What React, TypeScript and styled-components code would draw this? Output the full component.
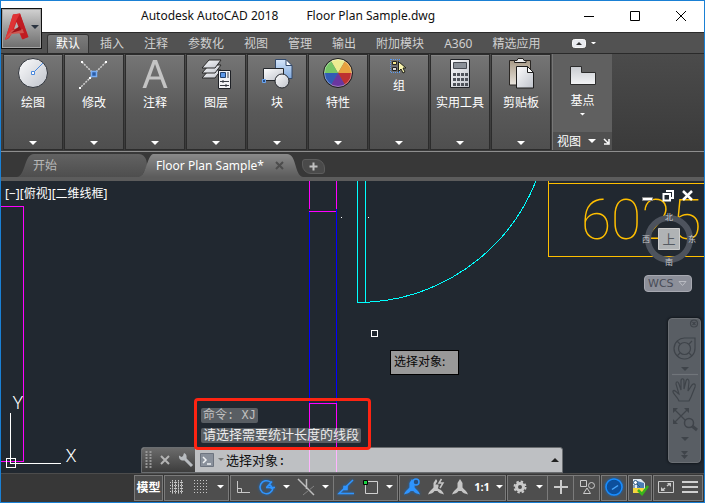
import React from "react";
import styled, { createGlobalStyle, css } from "styled-components";

const UI = `"Noto Sans", "Noto Sans CJK SC", sans-serif`;
const CJK = `"Noto Sans CJK SC", sans-serif`;

const Global = createGlobalStyle`
  * { box-sizing: border-box; }
  body { margin: 0; background: #373737; }
  button { border: 0; padding: 0; margin: 0; background: none; color: inherit; font: inherit; }
  svg { display: block; flex: none; }
`;

const Window = styled.div`
  position: relative;
  display: flex;
  flex-direction: column;
  height: 100vh;
  border: 1px solid #1a80d4;
  font: 12px/18px ${CJK};
  color: #e6e6e6;
  overflow: hidden;
`;

/* ---------- title bar ---------- */
const TitleBar = styled.header`
  display: flex;
  align-items: center;
  height: 31px;
  flex: none;
  padding: 0 0 2px 140px;
  background: #fff;
  color: #111;
`;
const Title = styled.h1`
  display: flex;
  gap: 28px;
  margin: 0;
  flex: 1;
  font: 400 12px/20px ${UI};
  white-space: nowrap;
`;
const WindowButton = styled.button`
  display: grid;
  place-items: center;
  width: 46px;
  height: 28px;
`;
const AppButton = styled.button`
  position: absolute;
  left: 0;
  top: 7px;
  display: flex;
  align-items: center;
  justify-content: center;
  gap: 1px;
  width: 41px;
  height: 41px;
  padding-bottom: 3px;
  border: 1px solid #111;
  box-shadow: inset 0 0 0 1px #a5a5a5;
  background: linear-gradient(#d2d2d2, #9b9b9b 50%, #6e6e6e);
`;

/* ---------- ribbon ---------- */
const RibbonTabs = styled.nav`
  display: flex;
  align-items: flex-end;
  gap: 4px;
  height: 21px;
  flex: none;
  padding-left: 47px;
  border-top: 1px solid #2b2b2b;
  background: #525252;
`;
const RibbonTab = styled.button<{ $active?: boolean }>`
  height: 18px;
  padding: 0 8px;
  font: 12px/16px "Noto Sans", ${CJK};
  color: #d0d0d0;
  ${(p) =>
    p.$active &&
    css`
      color: #fff;
      background: linear-gradient(#7c7c7c, #676767);
      box-shadow: 0 0 0 1px #333;
      border-radius: 2px 2px 0 0;
    `}
`;
const RibbonToggle = styled.button`
  display: flex;
  align-items: center;
  gap: 5px;
  height: 20px;
  margin-left: 20px;
`;
const Ribbon = styled.section`
  display: flex;
  gap: 3px;
  height: 98px;
  flex: none;
  padding: 1px 0 2px 3px;
  background: linear-gradient(#4b4b4b, #3a3a3a);
  border-top: 1px solid #2a2a2a;
`;
const Panel = styled.button`
  display: flex;
  flex-direction: column;
  align-items: center;
  width: 58px;
  padding: 2px 0 4px;
  color: #fff;
  background: linear-gradient(#757575, #595959 60%, #4f4f4f);
  box-shadow: 0 0 0 1px #2c2c2c, inset 0 1px #858585;
`;
const PanelLabel = styled.span<{ $tight?: boolean }>`
  line-height: 18px;
  margin-top: ${(p) => (p.$tight ? 1 : 4)}px;
  white-space: nowrap;
`;
const Spacer = styled.span`
  flex: 1;
`;
const ViewPanel = styled.div`
  display: flex;
  flex-direction: column;
  width: 60px;
  margin: -1px 0 -1px -1px;
  color: #fff;
  background: #606060;
  border-left: 1px solid #777;
`;
const BaseButton = styled.button`
  display: flex;
  flex: 1;
  flex-direction: column;
  align-items: center;
  padding-top: 11px;
`;
const BaseArrow = styled.span`
  display: block;
  margin-top: 4px;
`;
const ViewFooter = styled.div`
  display: flex;
  align-items: center;
  gap: 7px;
  height: 18px;
  padding-left: 4px;
  background: #505050;
`;

/* ---------- document tabs ---------- */
const DocTabs = styled.nav`
  display: flex;
  align-items: flex-end;
  height: 30px;
  flex: none;
  padding-left: 16px;
  background: #383838;
  border-top: 1px solid #8e8e8e;
  border-bottom: 4px solid #5c5c5c;
`;
const DocTab = styled.div<{ $active?: boolean }>`
  display: flex;
  align-items: center;
  justify-content: space-between;
  width: ${(p) => (p.$active ? 164 : 130)}px;
  height: 23px;
  margin-right: ${(p) => (p.$active ? -1 : -8)}px;
  padding: 0 19px 0 ${(p) => (p.$active ? 17 : 16)}px;
  font: 12px/22px ${UI};
  white-space: nowrap;
  color: ${(p) => (p.$active ? "#fff" : "#b8b8b8")};
  background: ${(p) =>
    p.$active ? "linear-gradient(#8a8a8a, #5c5c5c)" : "linear-gradient(#626262, #4e4e4e)"};
  clip-path: ${(p) =>
    p.$active
      ? `path("M0 23 C7 22 8 2 14 0 H148 C158 0 155 21 164 23 Z")`
      : `path("M0 23 C9 21 7 0 17 0 H122 C129 1 130 7 130 12 L124 23 Z")`};
`;
const NewTab = styled.button`
  display: grid;
  place-items: center;
  width: 23px;
  height: 15px;
  margin-bottom: 3px;
  border: 1px solid #5c5c5c;
  border-radius: 3px 9px 3px 9px;
  background: #4a4a4a;
`;

/* ---------- drawing area ---------- */
const Canvas = styled.main`
  position: relative;
  flex: 1;
  min-height: 0;
  background: #212830;
  overflow: hidden;
`;
const Drawing = styled.svg`
  position: absolute;
  inset: 0;
  width: 100%;
  height: 100%;
`;
const ViewLabel = styled.div`
  position: absolute;
  left: 4px;
  top: 4px;
  font: 12px/18px ${UI};
  color: #fff;
`;
const ViewTools = styled.div`
  position: absolute;
  top: 9px;
  right: 6px;
  width: 60px;
  display: flex;
  flex-direction: column;
  align-items: center;
`;
const ViewButtons = styled.div`
  display: flex;
  gap: 8px;
  width: 52px;
  height: 12px;
`;
const Wcs = styled.button`
  display: flex;
  align-items: center;
  justify-content: space-between;
  width: 48px;
  height: 17px;
  margin-top: 7px;
  padding: 0 4px 0 3px;
  border: 1px solid #a7a9b1;
  border-radius: 4px;
  background: #8c8f99;
  font: 11px/15px "DejaVu Sans", sans-serif;
  color: #484c57;
`;
const NavBar = styled.aside`
  position: absolute;
  right: 3px;
  bottom: 10px;
  display: flex;
  flex-direction: column;
  align-items: center;
  width: 33px;
  height: 145px;
  border: 1px solid #6b6f74;
  border-radius: 4px;
  background: #595e64;
  box-shadow: 0 0 2px 1px #14191f;
`;
const Prompt = styled.div`
  position: absolute;
  left: 389px;
  top: 169px;
  width: 69px;
  height: 25px;
  padding: 0 3px;
  border: 1px solid #000;
  background: #999;
  color: #080808;
  line-height: 20px;
`;
const Command = styled.section`
  position: absolute;
  left: 140px;
  right: 141px;
  bottom: 0;
  font: 13px/18px "Liberation Mono", ${CJK};
`;
const History = styled.div`
  display: flex;
  flex-direction: column;
  align-items: flex-start;
  gap: 5px;
  padding: 0 0 4px 60px;
`;
const HistoryLine = styled.div`
  height: 15px;
  padding: 0 2px;
  border-radius: 2px;
  background: rgba(125, 128, 130, 0.62);
  color: #ececec;
  line-height: 15px;
  white-space: pre;
`;
const Muted = styled.span`
  font-size: 12px;
  color: #c2c2c2;
`;
const CommandLine = styled.label`
  display: flex;
  align-items: center;
  height: 26px;
  border: 1px solid #6a6d70;
  border-radius: 3px 3px 0 0;
  overflow: hidden;
  background: rgba(255, 255, 255, 0.71);
`;
const CommandTools = styled.span`
  display: flex;
  align-items: center;
  gap: 7px;
  width: 53px;
  height: 26px;
  padding-left: 3px;
  background: linear-gradient(#6d6d6d, #3b3b3b);
`;
const CommandInput = styled.input`
  flex: 1;
  min-width: 0;
  height: 22px;
  padding: 0 0 2px 2px;
  border: 0;
  outline: 0;
  background: none;
  font: 13px/20px "Liberation Mono", ${CJK};
  color: #111;
`;
const Highlight = styled.div`
  position: absolute;
  left: 193px;
  bottom: 23px;
  width: 177px;
  height: 52px;
  border: 3px solid #fe2412;
  border-radius: 4px;
`;

/* ---------- status bar ---------- */
const StatusBar = styled.footer`
  display: flex;
  justify-content: flex-end;
  gap: 1px;
  height: 29px;
  flex: none;
  padding: 1px;
  border-top: 1px solid #4c4c4c;
  background: #373737;
`;
const StatusGroup = styled.div`
  display: flex;
  border: 1px solid #7b7b7b;
  background: #4e4e4e;
`;
const StatusButton = styled.button<{ $w?: number; $split?: boolean; $scale?: boolean }>`
  display: flex;
  align-items: center;
  justify-content: center;
  gap: 6px;
  width: ${(p) => p.$w ?? 24}px;
  border-left: ${(p) => (p.$split ? "1px solid #7b7b7b" : "0")};
  font: ${(p) => (p.$scale ? `700 11px/18px "Open Sans", sans-serif` : `700 12px/18px ${CJK}`)};
  padding-bottom: 2px;
  color: #fff;
`;

/* ---------- icons ---------- */
const Down = ({ w = 8, fill = "#fff" }: { w?: number; fill?: string }) => (
  <svg width={w} height={w / 2} viewBox="0 0 8 4">
    <path d="M0 0H8L4 4Z" fill={fill} />
  </svg>
);

const I = ({ s = 32, children }: { s?: number; children: React.ReactNode }) => (
  <svg width={s} height={s} viewBox={`0 0 ${s} ${s}`} fill="none">
    {children}
  </svg>
);

const Defs = styled.svg`
  position: absolute;
`;
const Gradients = () => (
  <Defs width="0" height="0" aria-hidden="true">
    <defs>
      <linearGradient id="silver" x1="0" y1="0" x2="1" y2="1">
        <stop offset="0" stopColor="#fdfdfe" />
        <stop offset="1" stopColor="#bfc3cb" />
      </linearGradient>
      <linearGradient id="base" x1="0" y1="0" x2="0" y2="1">
        <stop offset="0" stopColor="#c9ccd1" />
        <stop offset="1" stopColor="#f2f3f5" />
      </linearGradient>
      <linearGradient id="blue" x1="0" y1="0" x2="0" y2="1">
        <stop offset="0" stopColor="#d6e6fa" />
        <stop offset="1" stopColor="#7fa8dc" />
      </linearGradient>
      <linearGradient id="tan" x1="0" y1="0" x2="0" y2="1">
        <stop offset="0" stopColor="#a89a86" />
        <stop offset="1" stopColor="#e8e4dd" />
      </linearGradient>
      <filter id="glow" x="-50%" y="-50%" width="200%" height="200%">
        <feDropShadow dx="0" dy="0" stdDeviation="1.5" floodColor="#0a6ee0" floodOpacity="0.9" />
      </filter>
    </defs>
  </Defs>
);

const DrawIcon = () => (
  <I>
    <circle cx="16" cy="16" r="14.5" fill="url(#silver)" stroke="#30343b" />
    <path d="M17 15L26 6" stroke="#4a88dc" />
    <path d="M14.5 14.5h3v3h-3z" fill="#fff" stroke="#4a88dc" />
  </I>
);
const ModifyIcon = () => (
  <I>
    <path d="M4 5L15 16M28 5L2 31" stroke="#cfcfcf" strokeWidth="1.5" strokeDasharray="2 1" />
    <path d="M3 4h2v2H3zM27 4h2v2h-2zM11 20h2v2h-2zM1 30h2v2H1z" fill="#fff" />
    <path d="M13.5 14.5h5v5h-5z" fill="#2c5ea8" stroke="#78aef5" strokeWidth="1.5" />
  </I>
);
const AnnotateIcon = () => (
  <I>
    <path d="M14 3H18L28.500 31H24.800L21.600 22.500H10.400L7.200 31H3.500ZM16 7L11.500 19.500H20.500Z" fill="#c4c4c4" fillRule="evenodd" />
  </I>
);
const LayerIcon = () => (
  <I>
    {[13, 8, 3].map((y) => (
      <path key={y} d={`M9 ${y}H21L15 ${y + 8}H2Z`} fill="url(#silver)" stroke="#292929" />
    ))}
    <path d="M18.500 13.500H30.500V31.500H18.500Z" fill="#f2f3f5" stroke="#1e2126" />
    <path d="M20.500 15.500h5v5h-5z" fill="#5c98e8" stroke="#22426f" />
    <path d="M20 24.500H29M20 28.500H29M23 23v3M26 27v3" stroke="#383c44" />
    <path d="M27 15h2v6h-2z" fill="#9498a0" />
  </I>
);
const BlockIcon = () => (
  <I>
    <path d="M14.500 2.500H25L31 9V21.500H14.500Z" fill="url(#blue)" stroke="#33496a" />
    <path d="M25 2.500V8.500H31Z" fill="#fff" stroke="#33496a" />
    <path d="M2.500 11.500H22.500V23.500H2.500Z" fill="url(#silver)" stroke="#24272c" />
    <circle cx="21" cy="24" r="7" fill="url(#silver)" stroke="#24272c" />
    <path d="M1.500 22.500h3v3h-3z" fill="#244d86" stroke="#6aa5f2" />
  </I>
);
const wheel = ["#ecec91", "#e7a13e", "#bd3030", "#6b36a0", "#315cb4", "#75c565"];
const PropsIcon = () => (
  <I>
    {wheel.map((c, i) => {
      const a = ((-120 + i * 60) * Math.PI) / 180;
      const b = a + Math.PI / 3;
      return (
        <path
          key={c}
          d={`M16 16L${16 + 14 * Math.cos(a)} ${16 + 14 * Math.sin(a)}A14 14 0 0 1 ${16 + 14 * Math.cos(b)} ${16 + 14 * Math.sin(b)}Z`}
          fill={c}
        />
      );
    })}
    <circle cx="16" cy="16" r="14.500" stroke="#1c1c1c" />
    <circle cx="16" cy="16" r="13.500" stroke="#fff" strokeOpacity="0.35" />
  </I>
);
const GroupIcon = () => (
  <I s={18}>
    <path d="M1 2.500H10M1 15.500H10M0.500 2V16M9.500 2V16" stroke="#5a9af2" strokeDasharray="1 1" />
    <path d="M2.500 4.500h4v3h-4z" fill="#f7e98a" stroke="#222" />
    <path d="M2.500 10.500h4v3h-4z" fill="#ddd" stroke="#222" />
    <path d="M8.500 4.500V14.500L11 12L13 16L15 15L13 11H16Z" fill="#f8f4ae" stroke="#20201a" />
  </I>
);
const CalcIcon = () => (
  <I>
    <path d="M6.500 2.500H25.500V30.500H6.500Z" fill="url(#silver)" stroke="#202226" />
    <path d="M9.500 5.500H22.500V11.500H9.500Z" fill="#8a9098" stroke="#464a52" />
    {[16, 21, 26].map((y) =>
      [9, 13, 17, 21].map((x) => <path key={`${x}-${y}`} d={`M${x} ${y}h3v3h-3z`} fill="#4e525a" />)
    )}
  </I>
);
const ClipIcon = () => (
  <I>
    <path d="M4.500 3.500H25.500V28H4.500Z" fill="url(#tan)" stroke="#2a2724" />
    <path d="M9.500 5.500V3.500H12L13 1.500H18L19 3.500H21V5.500Z" fill="#eee" stroke="#24211e" />
    <path d="M11.500 9.500H22.500L28.500 15.500V31H11.500Z" fill="url(#silver)" stroke="#1c1c1c" />
    <path d="M22.500 9.500V15.500H28.500Z" fill="#fff" stroke="#1c1c1c" />
  </I>
);

const panels: { label: string; icon: React.ReactNode; tight?: boolean }[] = [
  { label: "绘图", icon: <DrawIcon /> },
  { label: "修改", icon: <ModifyIcon /> },
  { label: "注释", icon: <AnnotateIcon /> },
  { label: "图层", icon: <LayerIcon /> },
  { label: "块", icon: <BlockIcon /> },
  { label: "特性", icon: <PropsIcon /> },
  { label: "组", icon: <GroupIcon />, tight: true },
  { label: "实用工具", icon: <CalcIcon /> },
  { label: "剪贴板", icon: <ClipIcon /> },
];
const tabs = ["默认", "插入", "注释", "参数化", "视图", "管理", "输出", "附加模块", "A360", "精选应用"];

const ViewCube = () => (
  <svg width="60" height="66" viewBox="0 0 60 66" fill="none" fontFamily="Noto Sans CJK SC" fontSize="8" textAnchor="middle">
    <circle cx="31" cy="37" r="21" stroke="#4d535d" strokeWidth="6" />
    <path d="M20.500 26.500h21v21h-21z" fill="#b0b3b5" stroke="#cdcdcd" />
    <text x="31" y="42" fontSize="13" fill="#555a61">上</text>
    <g fill="#c9cbce">
      <text x="31" y="18">北</text>
      <text x="31" y="63">南</text>
      <text x="8" y="40">西</text>
      <text x="54" y="40">东</text>
    </g>
  </svg>
);

const NavIcons = () => (
  <svg width="31" height="143" viewBox="0 0 31 143" fill="none" stroke="#3f444a" strokeWidth="1.200">
    <circle cx="25" cy="4.500" r="3.500" />
    <path d="M23.500 3l3 3M26.500 3l-3 3" />
    <path d="M16 19H26V29A10.500 10.500 0 1 1 16 19Z" />
    <circle cx="15.500" cy="29.500" r="6" />
    <path d="M8 22L11 25M20 25L23 22M8 37L11 34M20 34L23 37" />
    <path d="M12 48H20L16 52Z" fill="#3f444a" stroke="none" />
    <path d="M3 55.500H29" stroke="#70757a" />
    <path d="M10 82C8 77 3 74 4 72C6 70 8 74 10 75L7 65C7 62 9 62 10 65L12 71L12 62C12 59 15 59 15 62V70L17 62C18 59 20 60 20 63L19 72L23 66C25 64 27 65 26 68L22 78L20 82Z" />
    <path d="M5 90L19 104M19 90L5 104" />
    <path d="M4 89h5l-5 5zM20 89v5l-5-5zM4 105v-5l5 5z" fill="#3f444a" stroke="none" />
    <circle cx="20" cy="104" r="4.500" fill="#595e64" strokeWidth="1.500" />
    <path d="M23 107L28 111" strokeWidth="3" />
    <path d="M12 118H20L16 122ZM12 132H19L15.500 136ZM12 136H19L15.500 140Z" fill="#3f444a" stroke="none" />
  </svg>
);

const PersonIcon = ({ blue, extra }: { blue?: boolean; extra?: React.ReactNode }) => (
  <I s={20}>
    <g fill={blue ? "#2f95ff" : "#c6c6c6"} filter={blue ? "url(#glow)" : undefined}>
      <path d="M10 2L12.500 6V10.500C14 12.500 17 14 18 17.500C15 16.500 12.500 16 11.500 14H8.500C7.500 16 5 16.500 2 17.500C3 14 6 12.500 7.500 10.500V6Z" />
    </g>
    {extra}
  </I>
);

export default function App() {
  return (
    <Window>
      <Global />
      <Gradients />
      <TitleBar>
        <Title>
          <span>Autodesk AutoCAD 2018</span>
          <span>Floor Plan Sample.dwg</span>
        </Title>
        <WindowButton aria-label="Minimize">
          <I s={12}><path d="M1 6.500H11" stroke="#000" /></I>
        </WindowButton>
        <WindowButton aria-label="Maximize">
          <I s={12}><path d="M1.500 1.500h9v9h-9z" stroke="#000" /></I>
        </WindowButton>
        <WindowButton aria-label="Close">
          <I s={12}><path d="M1 1L11 11M11 1L1 11" stroke="#000" /></I>
        </WindowButton>
      </TitleBar>
      <RibbonTabs>
        {tabs.map((t, i) => (
          <RibbonTab key={t} $active={i === 0}>{t}</RibbonTab>
        ))}
        <RibbonToggle aria-label="Minimize ribbon">
          <svg width="14" height="9" viewBox="0 0 14 9">
            <rect x="0.500" y="0.500" width="13" height="8" rx="2" fill="#e9ebf0" stroke="#f8f8f8" />
            <path d="M4 6L7 3L10 6Z" fill="#333" />
          </svg>
          <Down w={5} />
        </RibbonToggle>
      </RibbonTabs>
      <AppButton aria-label="Application menu">
        <svg width="26" height="28" viewBox="0 0 26 28">
          <path d="M9 1.500L16 0.500L24 24L18 26L15 19L8 20L5 25L1 27Z" fill="#d3272c" />
          <path d="M16 0.500L24.500 24L18.500 26.500L11 6Z" fill="#c01c22" />
          <path d="M9 1.500L16 0.500L12.500 7L5 25L1 27Z" fill="#df3335" />
          <path d="M12.500 9L15 15L10 16Z" fill="#b4b4b4" />
          <path d="M3 23L8 17L18.500 16L20 20L8 21L1 27Z" fill="#cf5650" />
          <path d="M7 20L15.500 13L17.500 17L9 19.500Z" fill="#9c1219" />
        </svg>
        <Down w={8} fill="#2b3440" />
      </AppButton>
      <Ribbon>
        {panels.map((p) => (
          <Panel key={p.label}>
            {p.icon}
            <PanelLabel $tight={p.tight}>{p.label}</PanelLabel>
            <Spacer />
            <Down />
          </Panel>
        ))}
        <ViewPanel>
          <BaseButton>
            <svg width="28" height="22" viewBox="0 0 28 22">
              <path d="M1.500 1.500H12.500V7.500H26.500V19.500H1.500Z" fill="url(#base)" stroke="#2c2c2c" />
            </svg>
            <PanelLabel>基点</PanelLabel>
            <BaseArrow><Down w={5} /></BaseArrow>
          </BaseButton>
          <ViewFooter>
            <span>视图</span>
            <Down w={8} />
            <I s={7}><path d="M1 1L5 5M6 1V6H1" stroke="#fff" strokeWidth="1.500" /></I>
          </ViewFooter>
        </ViewPanel>
      </Ribbon>
      <DocTabs>
        <DocTab>开始</DocTab>
        <DocTab $active>
          Floor Plan Sample*
          <I s={9}><path d="M1 1L8 8M8 1L1 8" stroke="#4c4c4c" strokeWidth="2" /></I>
        </DocTab>
        <NewTab aria-label="New tab">
          <I s={9}><path d="M4.500 0.500v8M0.500 4.500h8" stroke="#c0c0c0" strokeWidth="2" /></I>
        </NewTab>
      </DocTabs>
      <Canvas>
        <Drawing fill="none">
          <g transform="translate(-1 -181)" shapeRendering="crispEdges">
            <path d="M1 206.500H23.500V461.500H1" stroke="#f0f" />
            <path d="M309.500 181V209M336.500 181V209M309 211.500H337M309.500 473V403.500H336.500V473" stroke="#f0f" />
            <path d="M309.500 212V403M336.500 209V403" stroke="#00f" />
            <path d="M357.500 181V302.500H366M365.500 181V302" stroke="#0ff" />
            <path d="M357.500 302.500A193 193 0 0 0 536 181" stroke="#0ff" />
            <path d="M548.500 181V256.500H705M548 183.500H705" stroke="#ffbf00" />
            <path d="M371.500 330.500h6v6h-6z" stroke="#fff" />
            <path d="M341 217h1v1h-1zM368 217h1v1h-1z" fill="#fff" />
            <path d="M10.500 413V463.500H61M6.500 458.500h9v9h-9z" stroke="#fff" />
          </g>
          <text x="580" y="58" fill="#ffbf00" fontFamily="Roboto" fontWeight="100" fontSize="55">6025</text>
          <g fill="#fff" fontFamily="Roboto" fontWeight="300" fontSize="18" textAnchor="middle">
            <text x="17" y="228">Y</text>
            <text x="70" y="281">X</text>
          </g>
        </Drawing>
        <ViewLabel>[−][俯视][二维线框]</ViewLabel>
        <ViewTools>
          <ViewButtons>
            <I s={12}><path d="M0.500 7.500h10v3h-10z" fill="#fff" stroke="#888" /></I>
            <I s={12}><path d="M4 1h7v7h-3M1.500 4h6.500v6.500H1.500z" stroke="#fff" strokeWidth="2" /></I>
            <I s={12}><path d="M1 1L10 10M10 1L1 10" stroke="#fff" strokeWidth="2.500" /></I>
          </ViewButtons>
          <ViewCube />
          <Wcs>
            WCS
            <I s={9}><path d="M1 2.500H8L4.500 6.500Z" stroke="#b9bbc2" /></I>
          </Wcs>
        </ViewTools>
        <NavBar aria-label="Navigation">
          <NavIcons />
        </NavBar>
        <Prompt>选择对象:</Prompt>
        <Command>
          <History>
            <HistoryLine><Muted>命令: XJ</Muted></HistoryLine>
            <HistoryLine>请选择需要统计长度的线段</HistoryLine>
          </History>
          <CommandLine>
            <CommandTools>
              <svg width="7" height="18" viewBox="0 0 7 18">
                <path d="M1.500 0V18M5.500 0V18" stroke="#979797" strokeWidth="2" strokeDasharray="2 1" />
              </svg>
              <I s={12}><path d="M2 2L10 10M10 2L2 10" stroke="#b4b4b4" strokeWidth="2" /></I>
              <I s={16}>
                <path d="M7 7L14 14" stroke="#b8bcc0" strokeWidth="3" />
                <path d="M6 1L5 4L3.500 5L1 3.500C0.500 7 3 9 6 8.500L8.500 6.500C9 3.500 8 1.500 6 1Z" fill="#b8bcc0" />
              </I>
            </CommandTools>
            <svg width="29" height="16" viewBox="0 0 29 16" fill="none">
              <path d="M5.500 1.500h13v13h-13z" fill="#8a919c" stroke="#6d747f" />
              <path d="M8 5L11 8L8 11M12 12H16" stroke="#f0f2f4" strokeWidth="1.500" />
              <path d="M23 6H29L26 9Z" fill="#777" />
            </svg>
            <CommandInput aria-label="Command" defaultValue="选择对象:" />
            <svg width="14" height="4" viewBox="0 0 14 4"><path d="M3 4L7 0L11 4Z" fill="#222" /></svg>
          </CommandLine>
        </Command>
        <Highlight />
      </Canvas>
      <StatusBar>
        <StatusGroup>
          <StatusButton $w={27}>模型</StatusButton>
        </StatusGroup>
        <StatusGroup>
          <StatusButton aria-label="Grid">
            <I s={16}><path d="M3.500 1V15M6.500 1V15M9.500 1V15M12.500 1V15M1 3.500H15M1 6.500H15M1 9.500H15M1 12.500H15" stroke="#c8c8c8" strokeDasharray="1 1" /><path d="M3.500 1V15M6.500 1V15M9.500 1V15M12.500 1V15" stroke="#c8c8c8" strokeOpacity="0.6" /></I>
          </StatusButton>
          <StatusButton aria-label="Snap">
            <I s={16}><path d="M1 1.500H15M1 4.500H15M1 7.500H15M1 10.500H15M1 13.500H15" stroke="#c8c8c8" strokeDasharray="1 2" /></I>
          </StatusButton>
          <StatusButton $w={15} aria-label="Snap options"><Down w={7} /></StatusButton>
        </StatusGroup>
        <StatusGroup>
          <StatusButton aria-label="Ortho">
            <I s={16}><path d="M2.500 2V13.500H15M2.500 9.500H6.500V13" stroke="#c8c8c8" /></I>
          </StatusButton>
          <StatusButton aria-label="Polar">
            <I s={20}><g filter="url(#glow)" stroke="#2f95ff" strokeWidth="1.500"><path d="M13.500 5A6.500 6.500 0 1 0 16 11M9.500 10.500L15 4.500M9 10.500H18M12.500 7C14 8 14.500 9.500 14.500 12" /></g></I>
          </StatusButton>
          <StatusButton $w={15} aria-label="Polar options"><Down w={7} /></StatusButton>
          <StatusButton aria-label="Isometric">
            <I s={18}><path d="M1 1L17 17M9.500 1V11" stroke="#bdbdbd" strokeWidth="1.500" /><path d="M17 8L6 17" stroke="#858585" /></I>
          </StatusButton>
          <StatusButton $w={15} aria-label="Isometric options"><Down w={7} /></StatusButton>
          <StatusButton $w={25} $split aria-label="Object snap tracking">
            <I s={20}><g filter="url(#glow)" stroke="#2f95ff" strokeWidth="1.500"><path d="M17 3L3 16.500H18" /><path d="M8 9.500h3v3h-3z" fill="#2f95ff" /></g></I>
          </StatusButton>
          <StatusButton aria-label="Object snap">
            <I s={18}><path d="M4.500 3.500h12v12h-12z" stroke="#d0d0d0" /><path d="M2.500 2.500h4v4h-4z" fill="#17d440" stroke="#050505" /></I>
          </StatusButton>
          <StatusButton $w={15} aria-label="Object snap options"><Down w={7} /></StatusButton>
        </StatusGroup>
        <StatusGroup>
          <StatusButton aria-label="Annotation visibility">
            <PersonIcon blue extra={<circle cx="14" cy="5" r="3" fill="#264f80" stroke="#2f95ff" strokeWidth="1.500" />} />
          </StatusButton>
          <StatusButton aria-label="Auto scale">
            <PersonIcon
              extra={
                <>
                  <path d="M15 1L12 6H17L13 12" stroke="#4e4e4e" strokeWidth="3" />
                  <path d="M15.500 2L13 6H17L14 11" stroke="#c6c6c6" strokeWidth="1.500" />
                </>
              }
            />
          </StatusButton>
          <StatusButton aria-label="Annotation scale"><PersonIcon /></StatusButton>
          <StatusButton $w={33} $scale>1:1<Down w={7} /></StatusButton>
        </StatusGroup>
        <StatusGroup>
          <StatusButton aria-label="Workspace">
            <I s={14}><circle cx="7" cy="7" r="3.500" stroke="#cbcbcb" strokeWidth="3" /><circle cx="7" cy="7" r="5.500" stroke="#cbcbcb" strokeWidth="2" strokeDasharray="2.400 1.920" /></I>
          </StatusButton>
          <StatusButton $w={15} aria-label="Workspace options"><Down w={7} /></StatusButton>
          <StatusButton $w={26} $split aria-label="Annotation monitor">
            <I s={16}><path d="M8 1V15M1 8H15" stroke="#cbcbcb" strokeWidth="2" /></I>
          </StatusButton>
          <StatusButton $w={26} $split aria-label="Isolate objects">
            <I s={16}><path d="M1.500 1.500h6v6h-6zM8 9L11.500 14.500H4.500Z" stroke="#cbcbcb" /><circle cx="12.500" cy="6.500" r="3" stroke="#cbcbcb" /></I>
          </StatusButton>
        </StatusGroup>
        <StatusGroup>
          <StatusButton aria-label="Hardware acceleration">
            <I s={22}><circle cx="11" cy="11" r="8" fill="#07509c" stroke="#188cff" strokeWidth="1.500" filter="url(#glow)" /><path d="M9 13.500L15 9.500" stroke="#49a8ff" strokeWidth="1.500" /></I>
          </StatusButton>
        </StatusGroup>
        <StatusGroup>
          <StatusButton $w={22} aria-label="Trusted drawing">
            <I s={18}>
              <path d="M2 1H10L14 5V11H2Z" fill="#dfe9f2" />
              <path d="M6 3L13 5V10H6Z" fill="#4b7db4" />
              <circle cx="4.500" cy="4.500" r="2" fill="#fff" stroke="#28567f" />
              <path d="M3 7V11M6 6L9 9" stroke="#28567f" />
              <path d="M2 10H13V15H2Z" fill="#f3d53d" />
              <path d="M7 12L11 16L17 8" stroke="#39b31b" strokeWidth="2.500" />
            </I>
          </StatusButton>
        </StatusGroup>
        <StatusGroup>
          <StatusButton aria-label="Clean screen">
            <I s={16}><path d="M0.500 2.500h15v11h-15z" stroke="#cbcbcb" /><path d="M9 7L12 4.500M7 9L4 11.500" stroke="#cbcbcb" strokeWidth="1.500" /><path d="M9 4h4v4zM3 8v4h4z" fill="#cbcbcb" /></I>
          </StatusButton>
          <StatusButton aria-label="Customize">
            <I s={16}><path d="M0 3H16M0 8H16M0 13H16" stroke="#d0d0d0" strokeWidth="2" /></I>
          </StatusButton>
        </StatusGroup>
      </StatusBar>
    </Window>
  );
}
